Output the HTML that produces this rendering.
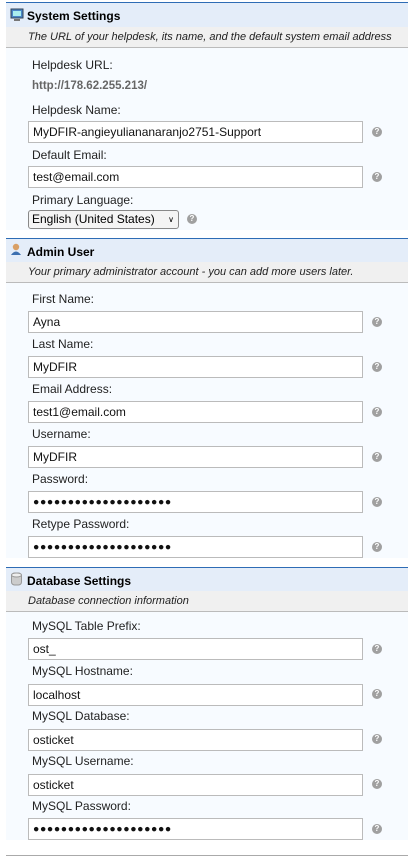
<!DOCTYPE html>
<html><head><style>
body{margin:0;width:408px;height:858px;background:#fff;font-family:"Liberation Sans",Arial,sans-serif;font-size:12px;color:#000;position:relative;overflow:hidden}
.a{position:absolute}
.sec{position:absolute;left:6px;right:0;background:#f7fbff}
.hd{position:absolute;left:6px;right:0;height:24px;background:#e4edf9;border-top:1px solid #2e6cb5;font-weight:bold;font-size:12px}
.hd span{position:absolute;left:21px;top:6px}
.ds{position:absolute;left:6px;right:0;height:20px;background:#f0f0f0;border-bottom:1px solid #bbb;font-style:italic;font-size:11px;color:#222}
.ds span{position:absolute;left:22px;top:4px}
.lb{position:absolute;left:32px;color:#222}
.in{position:absolute;left:28px;height:20px;border:1px solid #bbb;background:#fff;box-sizing:content-box;line-height:20px;padding-left:4px;width:329px;color:#111}
.q{position:absolute;left:372px;width:10px;height:10px;border-radius:50%;background:#a0a0a0;color:#fff;font-size:8px;font-weight:bold;text-align:center;line-height:10px}
.pw{font-size:10.5px;letter-spacing:0.6px}
</style></head><body>
<div class="sec" style="top:48px;height:182px"></div>
<div class="hd" style="top:2px"><span>System Settings</span></div>
<svg class="a" style="left:10px;top:8px" width="14" height="13"><rect x="1" y="1" width="12" height="9" fill="#4a86c8" stroke="#345"/><rect x="3" y="3" width="8" height="5" fill="#aee"/><rect x="4" y="11" width="6" height="2" fill="#777"/></svg>
<div class="ds" style="top:27px"><span>The URL of your helpdesk, its name, and the default system email address</span></div>
<div class="lb" style="top:58px">Helpdesk URL:</div>
<div class="lb" style="top:80px;color:#666;font-weight:bold;font-size:11.5px">http://178.62.255.213/</div>
<div class="lb" style="top:103px">Helpdesk Name:</div>
<div class="in" style="top:121px">MyDFIR-angieyuliananaranjo2751-Support</div><div class="q" style="top:127px">?</div>
<div class="lb" style="top:148px">Default Email:</div>
<div class="in" style="top:166px">test@email.com</div><div class="q" style="top:172px">?</div>
<div class="lb" style="top:193px">Primary Language:</div>
<div class="a" style="left:28px;top:210px;width:146px;height:17px;border:1px solid #888;border-radius:3px;background:#f4f4f4;font-size:12px;line-height:17px;padding-left:3px">English (United States) <span style="position:absolute;right:4px;font-size:8px">&#8744;</span></div><div class="q" style="left:187px;top:214px">?</div>

<div class="sec" style="top:282px;height:276px"></div>
<div class="hd" style="top:238px"><span>Admin User</span></div>
<svg class="a" style="left:10px;top:243px" width="12" height="13"><circle cx="6" cy="4" r="3.2" fill="#d9a066"/><path d="M1 12 Q6 5 11 12Z" fill="#3c6fb0"/></svg>
<div class="ds" style="top:262px"><span>Your primary administrator account - you can add more users later.</span></div>
<div class="lb" style="top:292px">First Name:</div>
<div class="in" style="top:311px">Ayna</div><div class="q" style="top:317px">?</div>
<div class="lb" style="top:337px">Last Name:</div>
<div class="in" style="top:356px">MyDFIR</div><div class="q" style="top:362px">?</div>
<div class="lb" style="top:382px">Email Address:</div>
<div class="in" style="top:401px">test1@email.com</div><div class="q" style="top:407px">?</div>
<div class="lb" style="top:427px">Username:</div>
<div class="in" style="top:446px">MyDFIR</div><div class="q" style="top:452px">?</div>
<div class="lb" style="top:472px">Password:</div>
<div class="in pw" style="top:491px">●●●●●●●●●●●●●●●●●●●●</div><div class="q" style="top:497px">?</div>
<div class="lb" style="top:517px">Retype Password:</div>
<div class="in pw" style="top:536px">●●●●●●●●●●●●●●●●●●●●</div><div class="q" style="top:542px">?</div>

<div class="sec" style="top:611px;height:229px"></div>
<div class="hd" style="top:567px"><span>Database Settings</span></div>
<svg class="a" style="left:11px;top:572px" width="11" height="14"><rect x="0.5" y="1" width="10" height="12" rx="3" fill="#ccc" stroke="#999"/><ellipse cx="5.5" cy="3" rx="5" ry="2" fill="#eee" stroke="#999"/></svg>
<div class="ds" style="top:591px"><span>Database connection information</span></div>
<div class="lb" style="top:619px">MySQL Table Prefix:</div>
<div class="in" style="top:638px">ost_</div><div class="q" style="top:644px">?</div>
<div class="lb" style="top:664px">MySQL Hostname:</div>
<div class="in" style="top:684px">localhost</div><div class="q" style="top:689px">?</div>
<div class="lb" style="top:709px">MySQL Database:</div>
<div class="in" style="top:729px">osticket</div><div class="q" style="top:734px">?</div>
<div class="lb" style="top:754px">MySQL Username:</div>
<div class="in" style="top:774px">osticket</div><div class="q" style="top:779px">?</div>
<div class="lb" style="top:799px">MySQL Password:</div>
<div class="in pw" style="top:818px">●●●●●●●●●●●●●●●●●●●●</div><div class="q" style="top:824px">?</div>
<div class="a" style="left:6px;right:0;top:855px;height:1px;background:#aaa"></div>
</body></html>
